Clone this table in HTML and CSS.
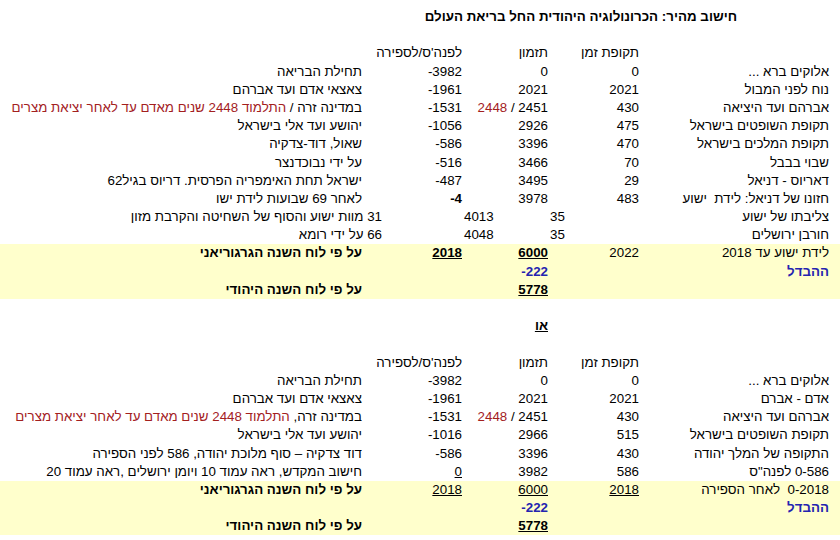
FILE: index.html
```html
<!DOCTYPE html>
<html lang="he" dir="rtl">
<head>
<meta charset="utf-8">
<title>חישוב מהיר</title>
<link rel="stylesheet" href="styles.css">
</head>
<body>
<div class="sheet">
  <div class="row title-row"><div class="title">חישוב מהיר: הכרונולוגיה היהודית החל בריאת העולם</div></div>
  <div class="row"></div>
  <div class="row grid">
    <div class="c"></div>
    <div class="c">תקופת זמן</div>
    <div class="c">תזמון</div>
    <div class="c">לפנה'ס/לספירה</div>
    <div class="c"></div>
  </div>
  <div class="row grid">
    <div class="c lbl">אלוקים ברא ...</div>
    <div class="c n">0</div>
    <div class="c n">0</div>
    <div class="c n">-3982</div>
    <div class="c">תחילת הבריאה</div>
  </div>
  <div class="row grid">
    <div class="c lbl">נוח לפני המבול</div>
    <div class="c n">2021</div>
    <div class="c n">2021</div>
    <div class="c n">-1961</div>
    <div class="c">צאצאי אדם ועד אברהם</div>
  </div>
  <div class="row grid">
    <div class="c lbl">אברהם ועד היציאה</div>
    <div class="c n">430</div>
    <div class="c n"><span class="red">2448</span> / 2451</div>
    <div class="c n">-1531</div>
    <div class="c">במדינה זרה / <span class="red">התלמוד 2448 שנים מאדם עד לאחר יציאת מצרים</span></div>
  </div>
  <div class="row grid">
    <div class="c lbl">תקופת השופטים בישראל</div>
    <div class="c n">475</div>
    <div class="c n">2926</div>
    <div class="c n">-1056</div>
    <div class="c">יהושע ועד אלי בישראל</div>
  </div>
  <div class="row grid">
    <div class="c lbl">תקופת המלכים בישראל</div>
    <div class="c n">470</div>
    <div class="c n">3396</div>
    <div class="c n">-586</div>
    <div class="c">שאול, דוד-צדקיה</div>
  </div>
  <div class="row grid">
    <div class="c lbl">שבוי בבבל</div>
    <div class="c n">70</div>
    <div class="c n">3466</div>
    <div class="c n">-516</div>
    <div class="c">על ידי נבוכדנצר</div>
  </div>
  <div class="row grid">
    <div class="c lbl">דאריוס - דניאל</div>
    <div class="c n">29</div>
    <div class="c n">3495</div>
    <div class="c n">-487</div>
    <div class="c">ישראל תחת האימפריה הפרסית. דריוס בגיל62</div>
  </div>
  <div class="row grid">
    <div class="c lbl">חזונו של דניאל: לידת&nbsp; ישוע</div>
    <div class="c n">483</div>
    <div class="c n">3978</div>
    <div class="c n b">-4</div>
    <div class="c">לאחר 69 שבועות לידת ישו</div>
  </div>
  <div class="row grid">
    <div class="c lbl">צליבתו של ישוע</div>
    <div class="c n left">35</div>
    <div class="c n left">4013</div>
    <div class="c wide">31 מוות ישוע והסוף של השחיטה והקרבת מזון</div>
  </div>
  <div class="row grid">
    <div class="c lbl">חורבן ירושלים</div>
    <div class="c n left">35</div>
    <div class="c n left">4048</div>
    <div class="c wide">66 על ידי רומא</div>
  </div>
  <div class="row grid hl">
    <div class="c lbl">לידת ישוע עד 2018</div>
    <div class="c n">2022</div>
    <div class="c n b u">6000</div>
    <div class="c n b u">2018</div>
    <div class="c b">על פי לוח השנה הגרגוריאני</div>
  </div>
  <div class="row grid hl">
    <div class="c lbl b blue">ההבדל</div>
    <div class="c"></div>
    <div class="c n b blue">-222</div>
    <div class="c"></div>
    <div class="c"></div>
  </div>
  <div class="row grid hl">
    <div class="c"></div>
    <div class="c"></div>
    <div class="c n b u">5778</div>
    <div class="c"></div>
    <div class="c b">על פי לוח השנה היהודי</div>
  </div>
  <div class="row"></div>
  <div class="row grid">
    <div class="c"></div>
    <div class="c"></div>
    <div class="c b u">או</div>
    <div class="c"></div>
    <div class="c"></div>
  </div>
  <div class="row"></div>
  <div class="row grid">
    <div class="c"></div>
    <div class="c">תקופת זמן</div>
    <div class="c">תזמון</div>
    <div class="c">לפנה'ס/לספירה</div>
    <div class="c"></div>
  </div>
  <div class="row grid">
    <div class="c lbl">אלוקים ברא ...</div>
    <div class="c n">0</div>
    <div class="c n">0</div>
    <div class="c n">-3982</div>
    <div class="c">תחילת הבריאה</div>
  </div>
  <div class="row grid">
    <div class="c lbl">אדם - אברם</div>
    <div class="c n">2021</div>
    <div class="c n">2021</div>
    <div class="c n">-1961</div>
    <div class="c">צאצאי אדם ועד אברהם</div>
  </div>
  <div class="row grid">
    <div class="c lbl">אברהם ועד היציאה</div>
    <div class="c n">430</div>
    <div class="c n"><span class="red">2448</span> / 2451</div>
    <div class="c n">-1531</div>
    <div class="c">במדינה זרה, <span class="red">התלמוד 2448 שנים מאדם עד לאחר יציאת מצרים</span></div>
  </div>
  <div class="row grid">
    <div class="c lbl">תקופת השופטים בישראל</div>
    <div class="c n">515</div>
    <div class="c n">2966</div>
    <div class="c n">-1016</div>
    <div class="c">יהושע ועד אלי בישראל</div>
  </div>
  <div class="row grid">
    <div class="c lbl">התקופה של המלך יהודה</div>
    <div class="c n">430</div>
    <div class="c n">3396</div>
    <div class="c n">-586</div>
    <div class="c">דוד צדקיה – סוף מלוכת יהודה, 586 לפני הספירה</div>
  </div>
  <div class="row grid">
    <div class="c lbl">0-586 לפנה"ס</div>
    <div class="c n">586</div>
    <div class="c n">3982</div>
    <div class="c n u">0</div>
    <div class="c">חישוב המקדש, ראה עמוד 10 ויומן ירושלים ,ראה עמוד 20</div>
  </div>
  <div class="row grid hl">
    <div class="c lbl">0-2018&nbsp; לאחר הספירה</div>
    <div class="c n u">2018</div>
    <div class="c n u">6000</div>
    <div class="c n u">2018</div>
    <div class="c b">על פי לוח השנה הגרגוריאני</div>
  </div>
  <div class="row grid hl">
    <div class="c lbl b blue">ההבדל</div>
    <div class="c"></div>
    <div class="c n b blue">-222</div>
    <div class="c"></div>
    <div class="c"></div>
  </div>
  <div class="row grid hl">
    <div class="c"></div>
    <div class="c"></div>
    <div class="c n b u">5778</div>
    <div class="c"></div>
    <div class="c b">על פי לוח השנה היהודי</div>
  </div>
</div>
</body>
</html>
```

FILE: styles.css
```css
html, body {
  background: #ffffff;
}

body {
  margin: 8px 0 0 0;
  font-family: "Liberation Sans", Arial, sans-serif;
  font-size: 13.33px;
  color: #000000;
  direction: rtl;
  overflow: hidden;
}

.sheet {
  width: 840px;
}

.row {
  height: 18.2px;
  line-height: 18.2px;
}

.title-row {
  padding-right: 103px;
}

.title {
  font-weight: bold;
  text-align: right;
  white-space: nowrap;
}

.grid {
  display: grid;
  grid-template-columns: 199px 91px 86px 100px 364px;
}

.c {
  padding: 0 2px;
  white-space: nowrap;
  text-align: right;
  min-width: 0;
}

.lbl {
  padding-right: 11px;
}

.n {
  direction: ltr;
  text-align: right;
}

.n.left {
  text-align: left;
  padding-left: 0;
}

.wide {
  grid-column: span 2;
  padding-right: 82px;
}

.b {
  font-weight: bold;
}

.u {
  text-decoration: underline;
}

.red {
  color: #a3201e;
}

.blue {
  color: #2424b0;
}

.hl {
  background: #ffffcc;
}
```
